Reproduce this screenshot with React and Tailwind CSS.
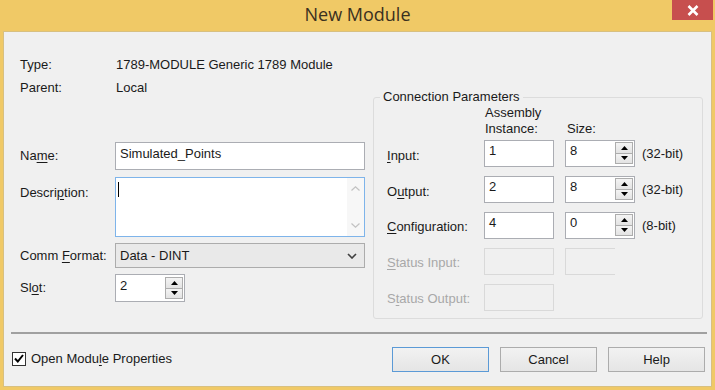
import React from 'react';

const ui = "font-['Liberation_Sans',Arial,sans-serif] text-[13px] text-[#1a1a1a]";

function Key({ children }) {
  return <span className="underline underline-offset-[2px] decoration-[1px]">{children}</span>;
}

function Tri({ up }) {
  return (
    <svg width="7" height="4" viewBox="0 0 7 4">
      {up ? <path d="M0 4 L3.5 0 L7 4 Z" fill="#000" /> : <path d="M0 0 L3.5 4 L7 0 Z" fill="#000" />}
    </svg>
  );
}

function Spinner() {
  return (
    <div className="flex flex-col w-[18px] h-[22px] mt-[1px] mr-[1px] ml-auto">
      <div className="flex-1 flex items-center justify-center border border-[#adadad] bg-linear-to-b from-[#f4f4f4] to-[#e3e3e3]">
        <Tri up />
      </div>
      <div className="flex-1 flex items-center justify-center border border-t-0 border-[#adadad] bg-linear-to-b from-[#f4f4f4] to-[#e3e3e3]">
        <Tri />
      </div>
    </div>
  );
}

function Box({ value, spin, className = '' }) {
  return (
    <div className={`flex items-start border border-[#abadb3] bg-white ${className}`}>
      <span className="pl-[4px] pt-[2px] leading-[16px]">{value}</span>
      {spin && <Spinner />}
    </div>
  );
}

function Dead({ className = '' }) {
  return <div className={`border border-[#d9d9d9] bg-[#f0f0f0] ${className}`} />;
}

function Btn({ children, primary }) {
  return (
    <button
      type="button"
      className={`w-[97px] h-[25px] border bg-linear-to-b from-[#f2f2f2] to-[#e5e5e5] text-[13px] ${primary ? 'border-[#5b9ad6]' : 'border-[#acacac]'}`}
    >
      {children}
    </button>
  );
}

export default function App() {
  return (
    <div className={`w-[715px] h-[390px] bg-[#f0c966] flex flex-col ${ui}`}>
      {/* Title bar */}
      <div className="relative h-[31px] flex items-center justify-center">
        <span className="font-['Open_Sans',sans-serif] text-[18px] text-[#3a3020] mt-[-3px]">New Module</span>
        <div className="absolute top-0 right-[2px] w-[41px] h-[20px] bg-[#c74f4e] flex items-center justify-center">
          <svg width="12" height="11" viewBox="0 0 12 11">
            <path d="M1.5 1 L10.5 10 M10.5 1 L1.5 10" stroke="#ffffff" strokeWidth="2.6" />
          </svg>
        </div>
      </div>

      {/* Client area */}
      <div className="flex-1 mx-[3px] mb-[3px] bg-[#f0f0f0] border border-[#d8c080] flex flex-col">
        <div className="flex">
          {/* Left column */}
          <div className="w-[361px] pl-[16px] flex flex-col">
            <div className="mt-[25px] flex leading-[16px]">
              <span className="w-[96px]">Type:</span>
              <span>1789-MODULE Generic 1789 Module</span>
            </div>
            <div className="mt-[7px] flex leading-[16px]">
              <span className="w-[96px]">Parent:</span>
              <span>Local</span>
            </div>

            <div className="mt-[46px] flex items-center">
              <span className="w-[95px]">Na<Key>m</Key>e:</span>
              <Box value="Simulated_Points" className="w-[250px] h-[28px] pt-[1px]" />
            </div>

            <div className="mt-[7px] flex">
              <span className="w-[95px] pt-[6px]">Descri<Key>p</Key>tion:</span>
              <div className="relative w-[250px] h-[60px] border border-[#7eb4ea] bg-white">
                <div className="absolute left-[2px] top-[4px] w-[1px] h-[15px] bg-black" />
                <div className="absolute right-0 top-0 bottom-0 w-[17px] bg-[#f7f7f7] flex flex-col items-center justify-between py-[8px]">
                  <svg width="9" height="5" viewBox="0 0 9 5"><path d="M0.5 4.5 L4.5 0.8 L8.5 4.5" stroke="#c2c2c2" strokeWidth="1.2" fill="none" /></svg>
                  <svg width="9" height="5" viewBox="0 0 9 5"><path d="M0.5 0.5 L4.5 4.2 L8.5 0.5" stroke="#c2c2c2" strokeWidth="1.2" fill="none" /></svg>
                </div>
              </div>
            </div>

            <div className="mt-[6px] flex items-center">
              <span className="w-[95px]">Comm <Key>F</Key>ormat:</span>
              <div className="w-[250px] h-[25px] border border-[#acacac] bg-[#e9e9e9] flex items-center pl-[4px] pr-[7px]">
                <span className="flex-1">Data - DINT</span>
                <svg width="10" height="6" viewBox="0 0 10 6"><path d="M1 1 L5 5 L9 1" stroke="#404040" strokeWidth="1.6" fill="none" /></svg>
              </div>
            </div>

            <div className="mt-[6px] flex items-center">
              <span className="w-[95px]">Sl<Key>o</Key>t:</span>
              <Box value="2" spin className="w-[70px] h-[28px] pt-[1px]" />
            </div>
          </div>

          {/* Connection Parameters */}
          <fieldset className="ml-[8px] mt-[57px] w-[330px] h-[230px] border border-[#dcdcdc] rounded-[3px]">
            <legend className="ml-[6px] px-[3px] leading-[16px]">Connection Parameters</legend>
            <div className="pl-[13px] grid grid-cols-[86px_70px_70px_auto] gap-x-[11px] items-center">
              <span />
              <span className="leading-[16px] pl-[1px]">Assembly<br />Instance:</span>
              <span className="self-end leading-[16px] pl-[2px]">Size:</span>
              <span />
            </div>
            <div className="pl-[13px] mt-[3px] grid grid-cols-[86px_70px_70px_auto] gap-x-[11px] gap-y-[9px] items-center">
              <span className="pt-[4px]"><Key>I</Key>nput:</span>
              <Box value="1" className="h-[27px]" />
              <Box value="8" spin className="h-[27px]" />
              <span className="-ml-[4px]">(32-bit)</span>

              <span className="pt-[4px]">O<Key>u</Key>tput:</span>
              <Box value="2" className="h-[27px]" />
              <Box value="8" spin className="h-[27px]" />
              <span className="-ml-[4px]">(32-bit)</span>

              <span className="pt-[2px]"><Key>C</Key>onfiguration:</span>
              <Box value="4" className="h-[27px]" />
              <Box value="0" spin className="h-[27px]" />
              <span className="-ml-[4px]">(8-bit)</span>

              <span className="pt-[2px] text-[#a8a8a8]"><Key>S</Key>tatus Input:</span>
              <Dead className="h-[27px]" />
              <Dead className="h-[27px] w-[50px] border-r-0" />
              <span />

              <span className="pt-[2px] text-[#a8a8a8]">S<Key>t</Key>atus Output:</span>
              <Dead className="h-[27px]" />
              <span />
              <span />
            </div>
          </fieldset>
        </div>

        {/* Separator */}
        <div className="mt-[13px] ml-[7px] mr-[4px] border-t-2 border-[#a0a0a0]" />

        {/* Bottom row */}
        <div className="mt-[13px] flex items-start pl-[8px] pr-[6px]">
          <div className="mt-[2px] flex items-center">
            <div className="w-[14px] h-[14px] border border-[#333] bg-white flex items-center justify-center">
              <svg width="10" height="9" viewBox="0 0 10 9"><path d="M1 4.5 L3.8 7.5 L9 1" stroke="#000" strokeWidth="2" fill="none" /></svg>
            </div>
            <span className="ml-[5px]">Open Modu<Key>l</Key>e Properties</span>
          </div>
          <div className="ml-auto flex gap-[11px]">
            <Btn primary>OK</Btn>
            <Btn>Cancel</Btn>
            <Btn>Help</Btn>
          </div>
        </div>
      </div>
    </div>
  );
}
